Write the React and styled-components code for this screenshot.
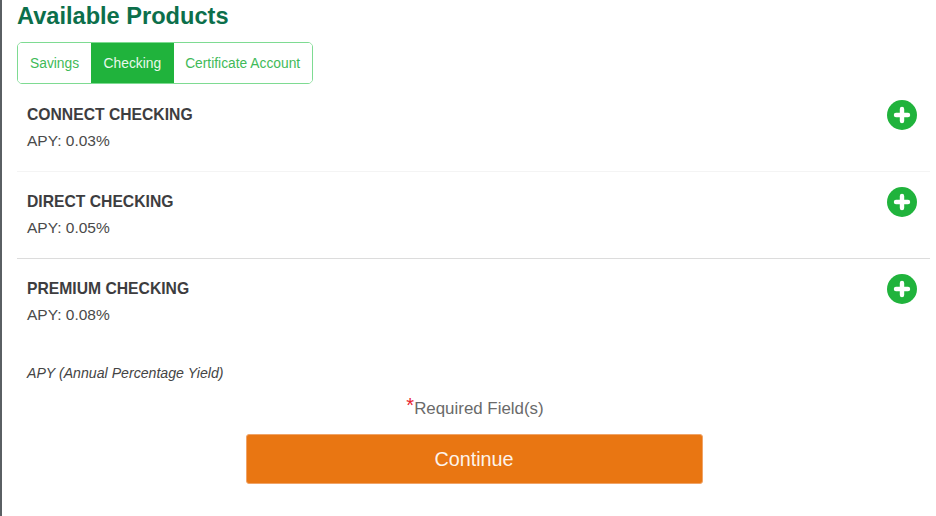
import React from 'react';
import styled, { createGlobalStyle } from 'styled-components';

const GlobalStyle = createGlobalStyle`
  html, body {
    margin: 0;
    padding: 0;
    background: #fff;
    overflow: hidden;
  }
`;

const Page = styled.div`
  width: 936px;
  height: 516px;
  box-sizing: border-box;
  border-left: 2px solid #5a5f63;
  padding: 2px 6px 0 15px;
  font-family: "Liberation Sans", Arial, sans-serif;
  color: #444;
`;

const Title = styled.h1`
  margin: 0;
  font-size: 23.6px;
  line-height: 29px;
  font-weight: 700;
  color: #0c6f4b;
`;

const Tabs = styled.div`
  display: inline-flex;
  margin-top: 11px;
  height: 42px;
  box-sizing: border-box;
  border: 1px solid #7edb92;
  border-radius: 5px;
  overflow: hidden;
`;

const Tab = styled.div`
  display: flex;
  align-items: center;
  padding: 0 ${props => props.$pad}px;
  font-size: 13.8px;
  color: ${props => (props.$active ? '#e9f8ec' : '#3fba58')};
  background: ${props => (props.$active ? '#20b33c' : '#fff')};
`;

const Row = styled.div`
  display: flex;
  justify-content: space-between;
  align-items: flex-start;
  box-sizing: border-box;
  height: ${props => props.$height}px;
  padding: ${props => props.$top}px 13px 0 10px;
  border-bottom: ${props => props.$line};
`;

const ProductName = styled.div`
  font-size: 15.7px;
  line-height: 18px;
  font-weight: 700;
  color: #3d3d40;
`;

const Apy = styled.div`
  margin-top: 8px;
  font-size: 15.5px;
  line-height: 18px;
  color: #4a4a4a;
`;

const AddSvg = styled.svg`
  display: block;
  width: 30px;
  height: 30px;
  margin-top: -6px;
`;

const Note = styled.div`
  padding-left: 10px;
  font-size: 14.15px;
  line-height: 17px;
  font-style: italic;
  color: #444;
`;

const Required = styled.div`
  margin-top: 17px;
  padding-left: 3px;
  text-align: center;
  font-size: 16.9px;
  line-height: 20px;
  color: #6a6a6a;
`;

const Star = styled.span`
  color: #e8222e;
  font-size: 20px;
  line-height: 10px;
  vertical-align: 2px;
`;

const ContinueButton = styled.button`
  display: block;
  width: 457px;
  height: 50px;
  margin: 15px 0 0 228.5px;
  border: 1px solid #f0a468;
  border-radius: 3px;
  background: #e97612;
  color: #fdf3ea;
  font-family: inherit;
  font-size: 19.8px;
`;

const AddIcon = () => (
  <AddSvg viewBox="0 0 30 30">
    <circle cx="15" cy="15" r="15" fill="#20b33c" />
    <path d="M15 9v12M9 15h12" stroke="#fff" strokeWidth="4.4" strokeLinecap="round" fill="none" />
  </AddSvg>
);

const products = [
  { name: 'CONNECT CHECKING', apy: '0.03%', height: 88, top: 22, line: '1px solid #f4f4f4' },
  { name: 'DIRECT CHECKING', apy: '0.05%', height: 87, top: 21, line: '1px solid #dcdcdc' },
  { name: 'PREMIUM CHECKING', apy: '0.08%', height: 106, top: 21, line: 'none' },
];

const App = () => (
  <>
    <GlobalStyle />
    <Page>
      <Title>Available Products</Title>
      <Tabs>
        <Tab $pad={12}>Savings</Tab>
        <Tab $pad={12.5} $active>Checking</Tab>
        <Tab $pad={11.5}>Certificate Account</Tab>
      </Tabs>
      {products.map(product => (
        <Row key={product.name} $height={product.height} $top={product.top} $line={product.line}>
          <div>
            <ProductName>{product.name}</ProductName>
            <Apy>APY: {product.apy}</Apy>
          </div>
          <AddIcon />
        </Row>
      ))}
      <Note>APY (Annual Percentage Yield)</Note>
      <Required><Star>*</Star>Required Field(s)</Required>
      <ContinueButton>Continue</ContinueButton>
    </Page>
  </>
);

export default App;
